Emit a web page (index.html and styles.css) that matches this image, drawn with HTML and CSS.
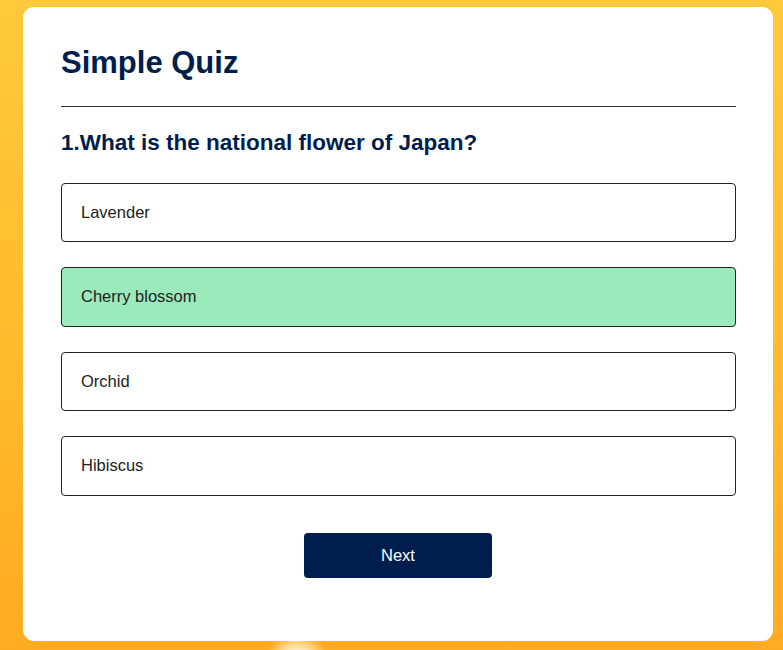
FILE: index.html
```html
<!DOCTYPE html>
<html lang="en">
<head>
<meta charset="utf-8">
<title>Simple Quiz</title>
<link rel="stylesheet" href="styles.css">
</head>
<body>
<div class="app">
  <h1 class="title">Simple Quiz</h1>
  <div class="quiz">
    <h2 class="question">1.What is the national flower of Japan?</h2>
    <div class="answers">
      <button class="btn">Lavender</button>
      <button class="btn correct">Cherry blossom</button>
      <button class="btn">Orchid</button>
      <button class="btn">Hibiscus</button>
    </div>
    <button class="next">Next</button>
  </div>
</div>
</body>
</html>
```
FILE: styles.css
```css
* { box-sizing: border-box; }
html, body { height: 100%; }
body {
  margin: 0;
  padding: 7px 10px 10px 23px;
  font-family: "Liberation Sans", Arial, sans-serif;
  background:
    radial-gradient(circle at 297px 664px, #ffffff 0, #fffaf0 8px, rgba(255,240,200,0.75) 18px, rgba(255,200,80,0) 32px),
    linear-gradient(180deg, #ffc93b 0%, #ffbc2e 50%, #ffab22 100%);
  background-repeat: no-repeat;
  overflow: hidden;
}
.app {
  background: #fff;
  border-radius: 11px;
  width: 750px;
  padding: 38px 37px 38px 38px;
}
.title {
  margin: 0;
  font-size: 31px;
  font-weight: bold;
  color: #001e4d;
  padding-bottom: 24.5px;
  border-bottom: 1px solid #333;
}
.quiz { padding-top: 23.5px; }
.question {
  margin: 0 0 26.6px;
  font-size: 22.5px;
  font-weight: bold;
  color: #001e4d;
}
.answers {
  display: flex;
  flex-direction: column;
  gap: 25px;
}
.btn {
  display: block;
  width: 100%;
  height: 59.5px;
  text-align: left;
  padding: 0 19px;
  font-family: inherit;
  font-size: 16.5px;
  color: #222;
  background: #fff;
  border: 1px solid #222;
  border-radius: 4px;
  cursor: pointer;
}
.btn.correct { background: #9aeabc; }
.next {
  display: block;
  margin: 37px 0 25px calc(50% - 94.5px);
  width: 188px;
  height: 45px;
  background: #001e4d;
  color: #fff;
  border: 0;
  border-radius: 4px;
  font-family: inherit;
  font-size: 16.5px;
  cursor: pointer;
}
```
